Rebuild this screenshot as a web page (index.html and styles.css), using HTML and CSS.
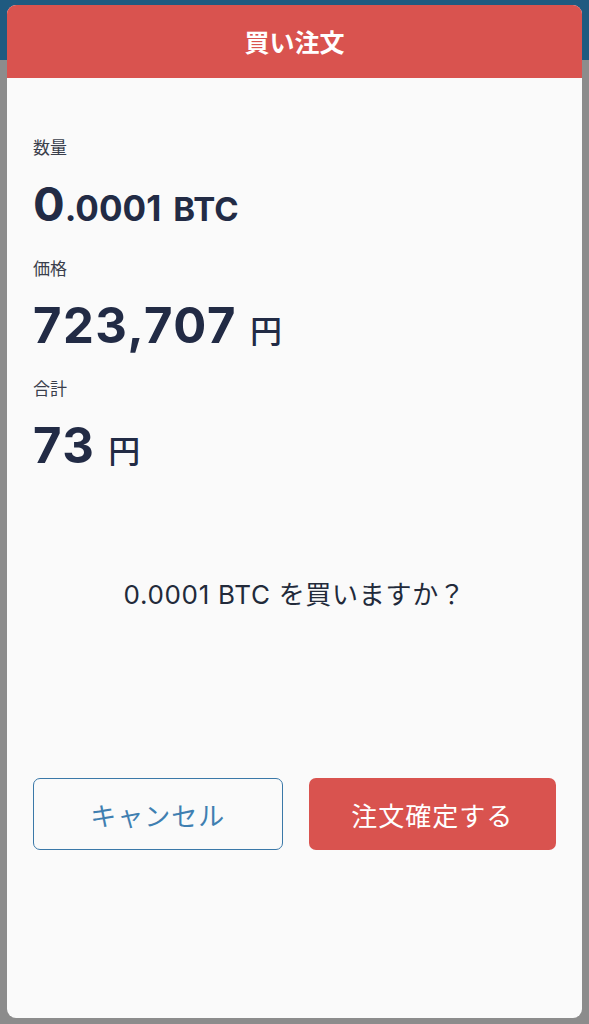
FILE: index.html
```html
<html lang="ja">
<head>
  <meta charset="UTF-8">
  <title>買い注文</title>
  <link rel="stylesheet" href="styles.css">
</head>
<body>

  <!-- Order confirmation dialog -->
  <div id="dialog">

    <header id="dialog-title">買い注文</header>

    <section id="summary">
      <div class="field-label">数量</div>
      <div class="field-value amount">
        <span class="lead">0</span><span>.0001</span><span class="unit-btc">BTC</span>
      </div>

      <div class="field-label">価格</div>
      <div class="field-value">
        <span class="big">723,707</span><span class="unit-yen">円</span>
      </div>

      <div class="field-label">合計</div>
      <div class="field-value">
        <span class="big">73</span><span class="unit-yen">円</span>
      </div>
    </section>

    <p id="question">0.0001 BTC を買いますか？</p>

    <!-- Action buttons -->
    <div id="actions">
      <button class="btn btn-cancel">キャンセル</button>
      <button class="btn btn-confirm">注文確定する</button>
    </div>

  </div>

</body>
</html>
```

FILE: styles.css
```css
html,
body {
  height: 100%;
  margin: 0;
}

body {
  background: linear-gradient(#1f5a80 0, #1f5a80 60px, #8c8c8c 60px);
  font-family: Inter, "Noto Sans CJK JP", sans-serif;
  color: #222b45;
  padding: 5px 7px 6px 7px;
  box-sizing: border-box;
}

#dialog {
  background-color: #fafafa;
  border-radius: 9px;
  height: 1013px;
  overflow: hidden;
  display: flex;
  flex-direction: column;
}

#dialog-title {
  background-color: #d9534f;
  color: white;
  font-family: "Noto Sans CJK JP", sans-serif;
  font-size: 25px;
  font-weight: bold;
  height: 73px;
  line-height: 73px;
  text-align: center;
}

#summary {
  padding: 57px 26px 0 26px;
}

.field-label {
  font-family: "Noto Sans CJK JP", sans-serif;
  font-size: 17px;
  color: #3a3f4c;
  line-height: 24px;
}

.field-value {
  font-weight: bold;
  line-height: 1;
  margin: 21px 0 26px 0;
  white-space: nowrap;
}

.amount {
  font-size: 35px;
  margin-top: 21px;
  margin-bottom: 29px;
}

.amount .lead {
  font-size: 47px;
}

.unit-btc {
  font-size: 33px;
  margin-left: 12px;
}

.big {
  font-size: 49px;
  letter-spacing: 1.5px;
}

.unit-yen {
  font-family: "Noto Sans CJK JP", sans-serif;
  font-size: 32px;
  font-weight: 500;
  margin-left: 13px;
}

#question {
  font-family: Inter, "Noto Sans CJK JP", sans-serif;
  font-size: 26px;
  letter-spacing: 0.7px;
  color: #222a3a;
  text-align: center;
  margin: 78px 0 0 0;
}

#actions {
  display: flex;
  gap: 26px;
  padding: 0 26px;
  margin-top: 167px;
}

.btn {
  flex: 1;
  height: 72px;
  border-radius: 7px;
  font-family: "Noto Sans CJK JP", sans-serif;
  font-size: 26px;
  letter-spacing: 1px;
}

.btn-cancel {
  background-color: #fafafa;
  border: 1.5px solid #3a78a8;
  color: #3f7fb1;
}

.btn-confirm {
  background-color: #d9534f;
  border: none;
  color: white;
}
```
